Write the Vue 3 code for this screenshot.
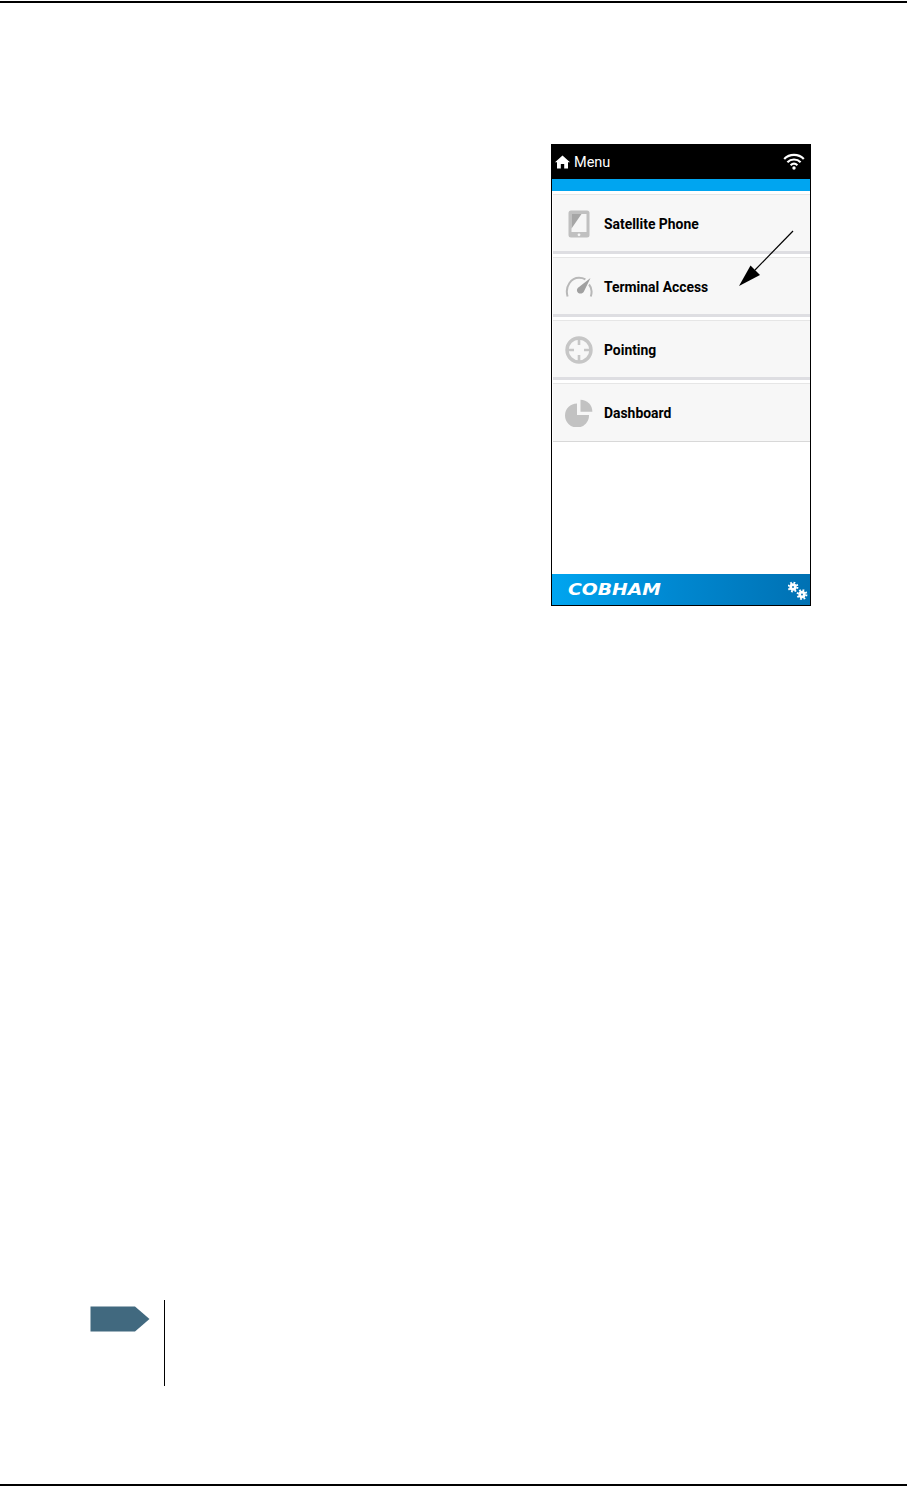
<template>
  <div class="page">
    <div class="rule top-rule"></div>

    <div class="phone">
      <header class="bar">
        <div class="bar-title">
          <svg class="home" width="15" height="14" viewBox="0 0 15 14">
            <path d="M7.5 0.5 L15 7.2 L13 7.2 L13 13.5 L9.2 13.5 L9.2 9 L5.8 9 L5.8 13.5 L2 13.5 L2 7.2 L0 7.2 Z" fill="#fff" />
          </svg>
          <span>Menu</span>
        </div>
        <svg class="wifi" width="22" height="17" viewBox="0 0 22 17" fill="none" stroke="#fff" stroke-width="2.2">
          <path d="M1.2 6 C6.5 0.6 15.5 0.6 20.8 6" />
          <path d="M4.4 9.2 C8 5.6 14 5.6 17.6 9.2" />
          <path d="M7.6 12.2 C9.6 10.4 12.4 10.4 14.4 12.2" />
          <circle cx="11" cy="15" r="1.7" fill="#fff" stroke="none" />
        </svg>
      </header>
      <div class="blue-strip"></div>

      <ul class="menu">
        <li v-for="item in items" :key="item.label" class="menu-row" :class="{ last: item.last }" :style="{ height: item.height + 'px' }">
          <span class="icon">
            <svg v-if="item.icon === 'tablet'" width="24" height="28" viewBox="0 0 24 28">
              <rect x="1.5" y="0.5" width="21" height="27" rx="2.5" fill="#c0c0c0" />
              <rect x="4.5" y="4" width="15" height="18" fill="#f6f6f6" />
              <path d="M4.5 4 H14.5 L4.5 18.5 Z" fill="#a6a6a6" />
              <circle cx="12" cy="24.8" r="1.4" fill="#f6f6f6" />
            </svg>
            <svg v-else-if="item.icon === 'gauge'" width="28" height="22" viewBox="0 0 28 22">
              <path d="M2.6 20.5 C-0.5 10 6.5 1.8 14 1.8 C16.4 1.8 18.6 2.4 20.4 3.4" fill="none" stroke="#b8b8b8" stroke-width="2" />
              <path d="M24 8.5 C26.6 11.5 27.2 16 25.8 20.5" fill="none" stroke="#b8b8b8" stroke-width="2" />
              <path d="M25.5 2 L18.8 15.8 C17.5 18.5 12.5 18 12 15 C11.7 13.3 12.5 12 14 11 Z" fill="#a0a0a0" />
            </svg>
            <svg v-else-if="item.icon === 'target'" width="28" height="28" viewBox="0 0 28 28">
              <circle cx="14" cy="14" r="12" fill="none" stroke="#c6c6c6" stroke-width="3.4" />
              <path d="M14 3 V9 M14 19 V25 M3 14 H9 M19 14 H25" stroke="#c6c6c6" stroke-width="2.6" />
            </svg>
            <svg v-else width="28" height="28" viewBox="0 0 28 28">
              <path d="M12 4.5 V16 H24 A12 12 0 1 1 12 4.5 Z" fill="#c2c2c2" />
              <path d="M15.5 0.8 A12 12 0 0 1 27.4 12.8 H15.5 Z" fill="#c2c2c2" />
            </svg>
          </span>
          <span class="label">{{ item.label }}</span>
        </li>
      </ul>

      <footer class="brand">
        <span class="logo">COBHAM</span>
        <svg class="gears" width="20" height="20" viewBox="0 0 20 20">
          <g v-for="gear in gears" :key="gear.x" :transform="`translate(${gear.x} ${gear.y})`" fill="none" stroke="#fff">
            <circle r="2.3" stroke-width="2.8" />
            <circle r="4.4" stroke-width="2" stroke-dasharray="1.73 1.73" />
          </g>
        </svg>
      </footer>

      <!-- callout arrow sits over the rows -->
      <svg class="pointer" width="70" height="70" viewBox="0 0 70 70">
        <path d="M62 2 L24 41" stroke="#000" stroke-width="1.2" fill="none" />
        <path d="M8 57 L19.5 36.5 L29 46 Z" fill="#000" />
      </svg>
    </div>

    <div class="note">
      <svg class="note-tag" width="60" height="26" viewBox="0 0 60 26">
        <path d="M0.5 0.5 H45 L59.5 13 L45 25.5 H0.5 Z" fill="#41697f" />
      </svg>
      <div class="note-line"></div>
    </div>

    <div class="rule bottom-rule"></div>
  </div>
</template>

<script setup>
const items = [
  { label: 'Satellite Phone', icon: 'tablet', height: 60 },
  { label: 'Terminal Access', icon: 'gauge', height: 60 },
  { label: 'Pointing', icon: 'target', height: 60 },
  { label: 'Dashboard', icon: 'pie', height: 59, last: true }
];

const gears = [
  { x: 5, y: 7 },
  { x: 14, y: 14.5 }
];
</script>

<style>
html,
body {
  margin: 0;
  background: #fff;
}
</style>

<style scoped>
.page {
  width: 907px;
  height: 1487px;
  display: flex;
  flex-direction: column;
  box-sizing: border-box;
  background: #fff;
  font-family: Roboto, "Liberation Sans", sans-serif;
  overflow: hidden;
}

.rule {
  height: 2px;
  background: #000;
  flex: none;
}

.top-rule {
  margin-top: 1px;
}

.bottom-rule {
  margin-top: auto;
  margin-bottom: 1px;
}

.phone {
  position: relative;
  align-self: flex-end;
  width: 260px;
  height: 462px;
  margin-top: 141px;
  margin-right: 96px;
  box-sizing: border-box;
  border: 1px solid #000;
  border-top: none;
  display: flex;
  flex-direction: column;
  background: #fff;
  flex: none;
}

.bar {
  height: 35px;
  background: #000;
  color: #fff;
  display: flex;
  align-items: center;
  justify-content: space-between;
  padding: 0 5px 0 3px;
  flex: none;
}

.bar-title {
  display: flex;
  align-items: center;
  gap: 4px;
  font-size: 14.5px;
  margin-top: 2px;
}

.home {
  margin-top: -1px;
}

.blue-strip {
  height: 12px;
  background: #00a5f0;
  flex: none;
}

.menu {
  list-style: none;
  margin: 3px 0 0;
  padding: 0;
  display: flex;
  flex-direction: column;
  gap: 3px;
}

.menu-row {
  box-sizing: border-box;
  margin-left: 1px;
  display: flex;
  align-items: center;
  background: #f7f7f7;
  border-top: 1px solid #e6e6e6;
  border-bottom: 3px solid #dedee2;
  padding-top: 2px;
}

.menu-row.last {
  border-bottom: 1px solid #d8d8d8;
  padding-top: 1px;
}

.icon {
  width: 51px;
  display: flex;
  justify-content: center;
  flex: none;
}

.label {
  font-size: 13.9px;
  font-weight: 700;
  color: #000;
}

.brand {
  margin-top: auto;
  height: 31px;
  background: linear-gradient(90deg, #00a5f0 0%, #0089d2 45%, #0071b3 100%);
  display: flex;
  align-items: center;
  justify-content: space-between;
  padding: 0 2px 0 16px;
  flex: none;
}

.logo {
  display: inline-block;
  color: #fff;
  font-family: "DejaVu Sans", sans-serif;
  font-size: 15px;
  font-weight: 700;
  font-style: italic;
  transform: scaleX(1.25);
  transform-origin: left center;
}

.pointer {
  position: absolute;
  left: 179px;
  top: 85px;
}

.note {
  display: flex;
  align-items: flex-start;
  margin-top: 694px;
  margin-left: 90px;
  flex: none;
}

.note-tag {
  margin-top: 6px;
  flex: none;
}

.note-line {
  width: 1px;
  height: 86px;
  background: #000;
  margin-left: 14px;
}
</style>
